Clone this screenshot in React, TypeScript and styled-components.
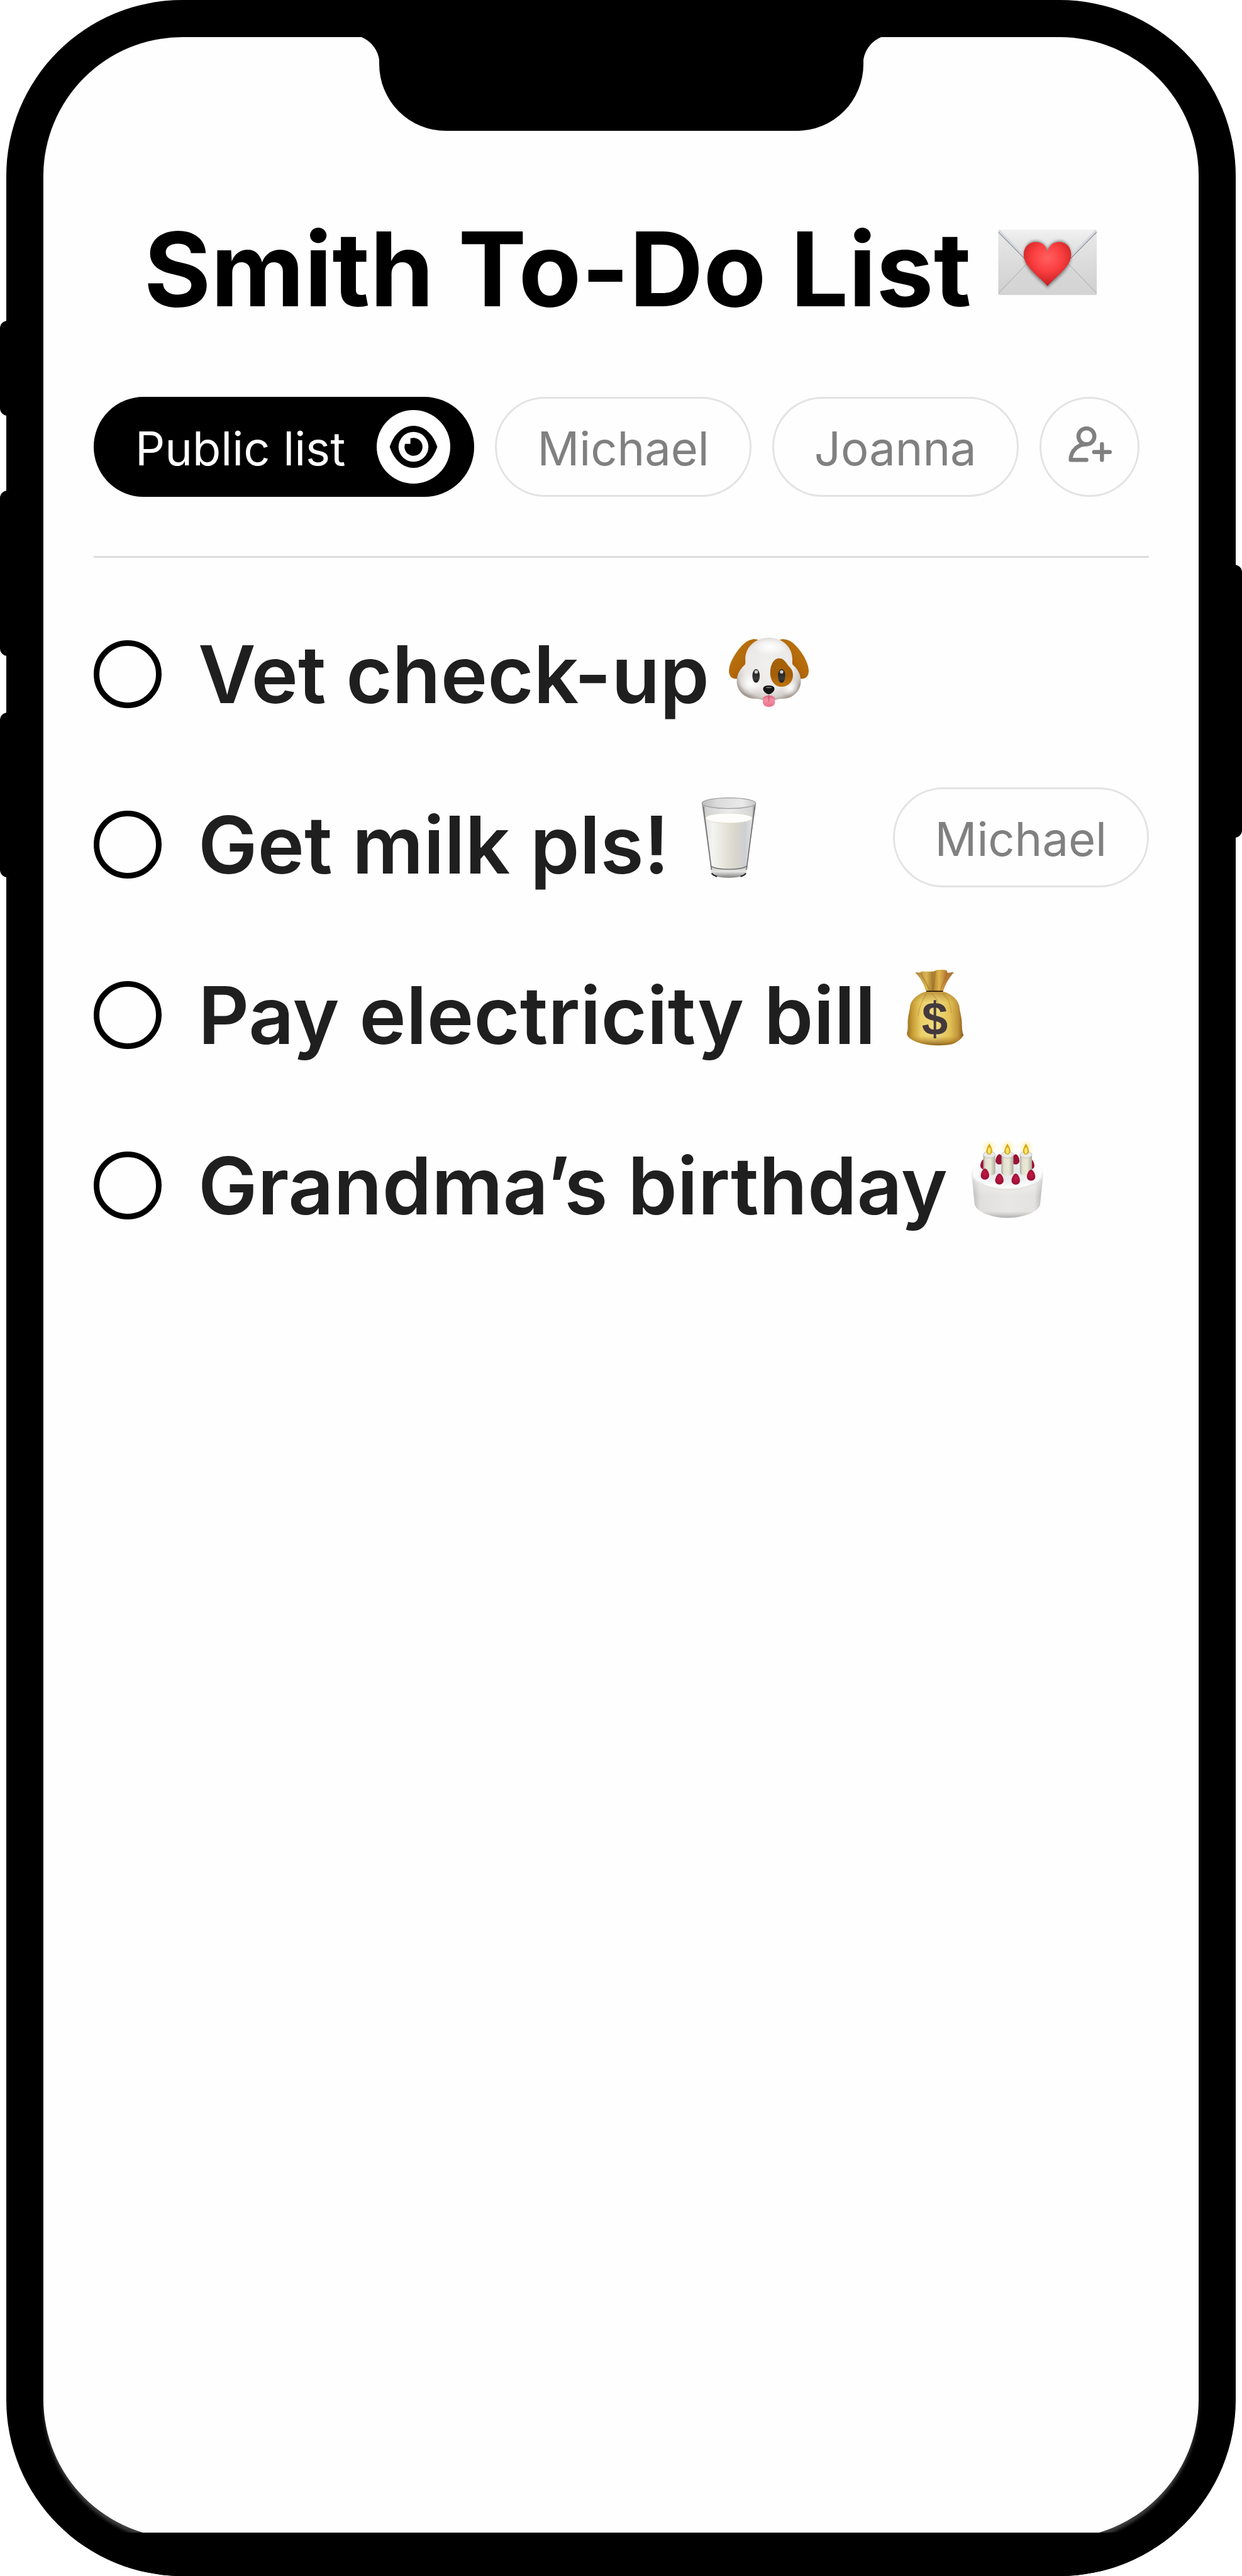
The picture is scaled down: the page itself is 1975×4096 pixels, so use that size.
import React from "react";
import styled, { createGlobalStyle, css } from "styled-components";

const GlobalStyle = createGlobalStyle`
  *, *::before, *::after { box-sizing: border-box; }
  body {
    margin: 0;
    background: #ffffff;
    color: #1f1f20;
    font-family: Inter, "Liberation Sans", sans-serif;
  }
`;

/* ---------- device ---------- */

const Device = styled.div`
  position: relative;
  display: flex;
  min-height: 100vh;
  padding: 0 10px;
`;

const Bezel = styled.div`
  position: relative;
  display: flex;
  flex: 1;
  min-width: 0;
  padding: 59px 59px 60px;
  border-radius: 280px;
  background: #000000;
  overflow: hidden;
`;

const SideKey = styled.span<{ $side: "left" | "right"; $top: number; $length: number }>`
  position: absolute;
  ${(p) => p.$side}: 0;
  top: ${(p) => p.$top}px;
  width: 40px;
  height: ${(p) => p.$length}px;
  border-radius: 12px;
  background: #000000;
`;

const Screen = styled.main`
  flex: 1;
  min-width: 0;
  padding: 274px 79px 160px 80px;
  border-radius: 221px;
  background: #fefefe;
  box-shadow: 0 7px 5px #3c3c3c;
`;

const Chin = styled.div`
  position: absolute;
  right: 0;
  bottom: 0;
  left: 0;
  height: 69px;
  background: #000000;
`;

const ear = css`
  content: "";
  position: absolute;
  top: 0;
  width: 47px;
  height: 43px;
`;

const Notch = styled.div`
  position: absolute;
  top: 59px;
  left: calc(50% - 385px);
  width: 770px;
  height: 149px;
  border-radius: 0 0 106px 106px;
  background: #000000;

  &::before {
    ${ear}
    left: -46px;
    background: radial-gradient(circle at 0 100%, transparent 46px, #000000 47px);
  }

  &::after {
    ${ear}
    right: -46px;
    background: radial-gradient(circle at 100% 100%, transparent 46px, #000000 47px);
  }
`;

/* ---------- header ---------- */

const Header = styled.header`
  display: flex;
  align-items: center;
  justify-content: center;
  gap: 40px;
`;

const Title = styled.h1`
  margin: 0;
  color: #000000;
  font-size: 163px;
  font-weight: 700;
  line-height: 190px;
  white-space: nowrap;
`;

const Emoji = styled.svg<{ $size: number }>`
  flex: none;
  width: ${(p) => p.$size}px;
  height: ${(p) => p.$size}px;
  margin-bottom: 24px;
  overflow: visible;
`;

/* ---------- people filter ---------- */

const pill = css`
  display: flex;
  flex: none;
  align-items: center;
  height: 159px;
  border: 3px solid #e3e3e1;
  border-radius: 80px;
  background: transparent;
  color: #808080;
  font-family: inherit;
  font-size: 74px;
  font-weight: 400;
  line-height: 96px;
  white-space: nowrap;
`;

const Filters = styled.nav`
  display: flex;
  gap: 33px;
  margin-top: 108px;
  padding-bottom: 94px;
  border-bottom: 3px solid #dddddd;
`;

const FilterPill = styled.button<{ $active?: boolean }>`
  ${pill}
  padding: 4px 64px 0;
  cursor: pointer;

  ${(p) =>
    p.$active &&
    css`
      gap: 50px;
      padding: 0 35px 0 63px;
      border-color: #000000;
      background: #000000;
      color: #ffffff;
    `}
`;

const PillText = styled.span`
  padding-top: 4px;
`;

const AddPill = styled.button`
  ${pill}
  justify-content: center;
  width: 159px;
  padding: 0;
  cursor: pointer;
`;

const PillIcon = styled.svg`
  flex: none;
  width: 117px;
  height: 117px;
`;

/* ---------- tasks ---------- */

const TaskList = styled.ul`
  display: flex;
  flex-direction: column;
  gap: 90px;
  margin: 0;
  padding: 94px 0 0;
  list-style: none;
`;

const Task = styled.li`
  display: flex;
  align-items: center;
  min-height: 181px;
`;

const Tick = styled.input`
  flex: none;
  appearance: none;
  width: 108px;
  height: 108px;
  margin: 0;
  border: 9px solid #000000;
  border-radius: 50%;
  cursor: pointer;

  &:checked {
    background: #000000;
  }
`;

const TaskLabel = styled.label`
  display: flex;
  flex: 1;
  align-items: center;
  gap: 30px;
  padding-left: 58px;
  font-size: 126px;
  font-weight: 600;
  line-height: 160px;
  white-space: nowrap;
  cursor: pointer;
`;

const Assignee = styled.span`
  ${pill}
  margin-bottom: 22px;
  padding: 4px 64px 0;
`;

/* ---------- drawings ---------- */

const LoveLetter = () => (
  <Emoji $size={163} viewBox="92 -44 802 802" role="img" aria-label="love letter">
    <defs>
      <linearGradient id="paper" x1="0" y1="0" x2="0" y2="1">
        <stop offset="0" stopColor="#e9e9e9" />
        <stop offset="1" stopColor="#cfcfcf" />
      </linearGradient>
      <linearGradient id="flap" x1="0" y1="0" x2="0" y2="1">
        <stop offset="0" stopColor="#f1f1f1" />
        <stop offset="0.75" stopColor="#d6d6d6" />
        <stop offset="1" stopColor="#b5b5b5" />
      </linearGradient>
      <radialGradient id="heart" cx="0.5" cy="0.36" r="0.68">
        <stop offset="0" stopColor="#ff6060" />
        <stop offset="0.45" stopColor="#fb3f40" />
        <stop offset="0.8" stopColor="#d42628" />
        <stop offset="1" stopColor="#b91c1f" />
      </radialGradient>
      <filter id="heartShade" x="-20%" y="-20%" width="140%" height="150%">
        <feGaussianBlur stdDeviation="11" />
      </filter>
      <clipPath id="letterClip">
        <rect x="108" y="104" width="772" height="512" rx="16" />
      </clipPath>
    </defs>
    <g clipPath="url(#letterClip)">
      <rect x="108" y="104" width="772" height="512" fill="url(#paper)" />
      <path d="M108 616L335 380H653L880 616Z" fill="#d6d6d6" opacity="0.7" />
      <path d="M108 604L330 372M880 604L658 372" stroke="#b9b9b9" strokeWidth="6" />
      <path d="M108 104H880L560 424Q494 480 428 424Z" fill="url(#flap)" />
      <path d="M112 112L400 400M876 112L588 400" stroke="#d6d9e0" strokeWidth="20" />
      <path d="M110 124L400 418M878 124L588 418" stroke="#8b8b8d" strokeWidth="6" />
    </g>
    <path
      d="M494 560C440 500 310 420 310 310C310 150 470 170 494 262C518 170 678 150 678 310C678 420 550 500 494 560Z"
      fill="#4b4b4b"
      opacity="0.6"
      filter="url(#heartShade)"
    />
    <path
      d="M494 545C455 500 400 460 350 400C322 366 308 335 308 298C308 240 350 201 403 201C450 201 483 228 494 276C505 228 538 201 585 201C638 201 679 240 679 298C679 335 665 366 637 400C587 460 533 500 494 545Z"
      fill="url(#heart)"
    />
  </Emoji>
);

const DogFace = () => (
  <Emoji $size={130} viewBox="69 15 640 640" role="img" aria-label="dog">
    <defs>
      <linearGradient id="earL" x1="0" y1="0" x2="1" y2="1">
        <stop offset="0" stopColor="#c07a14" />
        <stop offset="0.5" stopColor="#b3690a" />
        <stop offset="1" stopColor="#8a4a02" />
      </linearGradient>
      <linearGradient id="earR" x1="1" y1="0" x2="0" y2="1">
        <stop offset="0" stopColor="#c07a14" />
        <stop offset="0.5" stopColor="#b3690a" />
        <stop offset="1" stopColor="#8a4a02" />
      </linearGradient>
      <radialGradient id="fur" cx="0.5" cy="0.45" r="0.58">
        <stop offset="0" stopColor="#f1f0ef" />
        <stop offset="0.65" stopColor="#ebe9e8" />
        <stop offset="0.87" stopColor="#d3ceca" />
        <stop offset="1" stopColor="#a2978f" />
      </radialGradient>
      <radialGradient id="brow">
        <stop offset="0" stopColor="#ffffff" />
        <stop offset="1" stopColor="#ffffff" stopOpacity="0" />
      </radialGradient>
      <linearGradient id="patch" x1="0" y1="0" x2="0" y2="1">
        <stop offset="0" stopColor="#a8620a" />
        <stop offset="0.6" stopColor="#a35e08" />
        <stop offset="1" stopColor="#c2750f" />
      </linearGradient>
      <linearGradient id="tongue" x1="0" y1="0" x2="0" y2="1">
        <stop offset="0" stopColor="#d9657a" />
        <stop offset="0.4" stopColor="#f48fa3" />
        <stop offset="1" stopColor="#e5718a" />
      </linearGradient>
      <linearGradient id="eyeball" x1="0" y1="0" x2="0" y2="1">
        <stop offset="0" stopColor="#141414" />
        <stop offset="0.7" stopColor="#3a3a3a" />
        <stop offset="1" stopColor="#161616" />
      </linearGradient>
    </defs>
    <path d="M302 124C255 110 205 135 160 188C110 248 72 320 75 375C78 415 105 432 138 430L215 330L240 190Z" fill="url(#earL)" />
    <path d="M472 124C519 110 569 135 614 188C664 248 702 320 699 375C696 415 669 432 636 430L559 330L534 190Z" fill="url(#earR)" />
    <path
      d="M387 108C290 108 203 175 203 275C203 300 206 312 198 322C165 350 136 395 136 450C136 520 195 586 275 586C310 586 325 592 345 600H430C448 592 464 586 499 586C579 586 638 520 638 450C638 395 609 350 576 322C568 312 571 300 571 275C571 175 484 108 387 108Z"
      fill="url(#fur)"
    />
    <ellipse cx="400" cy="180" rx="140" ry="70" fill="url(#brow)" />
    <ellipse cx="240" cy="470" rx="100" ry="90" fill="url(#brow)" />
    <ellipse cx="555" cy="500" rx="70" ry="70" fill="url(#brow)" />
    <path d="M468 270C505 270 518 300 538 325C556 345 576 360 576 402C576 455 538 493 488 493C435 493 398 445 398 385C398 320 425 270 468 270Z" fill="url(#patch)" />
    <ellipse cx="287" cy="408" rx="29" ry="53" fill="url(#eyeball)" />
    <ellipse cx="487" cy="408" rx="29" ry="53" fill="url(#eyeball)" />
    <ellipse cx="288" cy="376" rx="14" ry="14" fill="#c9c9c9" />
    <ellipse cx="487" cy="376" rx="14" ry="14" fill="#c9c9c9" />
    <path d="M340 578Q387 540 435 578V612C435 636 415 650 387 650C360 650 340 636 340 612Z" fill="url(#tongue)" />
    <path d="M387 560V606" stroke="#c9556f" strokeWidth="6" strokeLinecap="round" />
    <path d="M387 483C415 483 431 492 431 510C431 530 402 552 387 552C372 552 342 530 342 510C342 492 359 483 387 483Z" fill="#151515" />
    <ellipse cx="387" cy="498" rx="24" ry="6" fill="#6d6d6d" />
  </Emoji>
);

const MilkGlass = () => (
  <Emoji $size={130} viewBox="30 84 640 640" role="img" aria-label="glass of milk">
    <defs>
      <linearGradient id="glassWall" x1="0" y1="0" x2="1" y2="0">
        <stop offset="0" stopColor="#9a9a9a" />
        <stop offset="0.08" stopColor="#d2d2d2" />
        <stop offset="0.5" stopColor="#ececec" />
        <stop offset="0.92" stopColor="#d5d5d5" />
        <stop offset="1" stopColor="#858585" />
      </linearGradient>
      <linearGradient id="milkBody" x1="0" y1="0" x2="1" y2="0">
        <stop offset="0" stopColor="#e6e6e6" />
        <stop offset="0.15" stopColor="#f4f4f1" />
        <stop offset="0.4" stopColor="#e7e5dc" />
        <stop offset="0.65" stopColor="#d8d5ca" />
        <stop offset="0.85" stopColor="#cecfd2" />
        <stop offset="1" stopColor="#e2e2e3" />
      </linearGradient>
      <linearGradient id="glassBase" x1="0" y1="0" x2="0" y2="1">
        <stop offset="0" stopColor="#bcbcba" />
        <stop offset="0.45" stopColor="#e6e6e4" />
        <stop offset="1" stopColor="#80807e" />
      </linearGradient>
      <linearGradient id="glassRim" x1="0" y1="0" x2="1" y2="0">
        <stop offset="0" stopColor="#bdbdbd" />
        <stop offset="0.3" stopColor="#dcdcdc" />
        <stop offset="0.75" stopColor="#e9e9e9" />
        <stop offset="1" stopColor="#c8c8c8" />
      </linearGradient>
    </defs>
    <path d="M138 145L215 690C240 735 460 735 484 690L563 145Z" fill="url(#glassWall)" />
    <path d="M168 255L214 632C260 662 440 662 488 630L533 262Z" fill="url(#milkBody)" />
    <ellipse cx="350" cy="256" rx="183" ry="39" fill="#fdfdfb" stroke="#ddd6c8" strokeWidth="4" />
    <ellipse cx="350" cy="139" rx="211" ry="42" fill="url(#glassRim)" stroke="#9b9b9b" strokeWidth="6" />
    <path d="M214 634C255 665 445 665 488 632L484 690C450 733 250 733 215 690Z" fill="url(#glassBase)" />
    <path d="M212 630C255 664 445 664 490 630" fill="none" stroke="#5e5e5e" strokeWidth="6" />
    <path d="M215 688C225 700 240 708 258 713M484 688C474 700 459 708 441 713" fill="none" stroke="#222222" strokeWidth="10" />
    <path d="M150 165L214 660M552 165L488 660" stroke="#6f6f6f" strokeWidth="8" />
  </Emoji>
);

const MoneyBag = () => (
  <Emoji $size={130} viewBox="9 66 640 640" role="img" aria-label="money bag">
    <defs>
      <linearGradient id="sack" x1="0" y1="0" x2="1" y2="0">
        <stop offset="0" stopColor="#9a7024" />
        <stop offset="0.1" stopColor="#c89d36" />
        <stop offset="0.25" stopColor="#ecd067" />
        <stop offset="0.5" stopColor="#f0db80" />
        <stop offset="0.75" stopColor="#e3c356" />
        <stop offset="0.9" stopColor="#c1953a" />
        <stop offset="1" stopColor="#855a1a" />
      </linearGradient>
      <linearGradient id="sackShade" x1="0" y1="0" x2="0" y2="1">
        <stop offset="0" stopColor="#a97a26" stopOpacity="0.7" />
        <stop offset="0.2" stopColor="#a97a26" stopOpacity="0" />
        <stop offset="0.82" stopColor="#b07a20" stopOpacity="0" />
        <stop offset="1" stopColor="#80500f" stopOpacity="0.85" />
      </linearGradient>
      <linearGradient id="ruff" x1="0" y1="0" x2="1" y2="0">
        <stop offset="0" stopColor="#b0813f" />
        <stop offset="0.3" stopColor="#d9b550" />
        <stop offset="0.45" stopColor="#a67a30" />
        <stop offset="0.62" stopColor="#e0b64c" />
        <stop offset="0.8" stopColor="#b87a34" />
        <stop offset="1" stopColor="#a3753a" />
      </linearGradient>
    </defs>
    <path
      d="M260 262C200 275 145 320 134 370C132 400 122 430 117 470C112 510 120 545 110 580C104 600 115 615 135 630C190 668 270 682 345 682C400 682 450 678 480 665C510 650 535 630 552 602C540 580 540 545 538 500C536 450 522 420 518 372C500 310 440 272 390 262Z"
      fill="url(#sack)"
    />
    <path
      d="M260 262C200 275 145 320 134 370C132 400 122 430 117 470C112 510 120 545 110 580C104 600 115 615 135 630C190 668 270 682 345 682C400 682 450 678 480 665C510 650 535 630 552 602C540 580 540 545 538 500C536 450 522 420 518 372C500 310 440 272 390 262Z"
      fill="url(#sackShade)"
    />
    <path d="M262 275C225 330 205 380 195 450M300 272C330 300 345 330 352 350M388 275C430 310 450 350 455 430" fill="none" stroke="#a87824" strokeWidth="9" opacity="0.35" />
    <path d="M258 258C240 200 215 150 172 114C190 108 205 114 216 110C220 98 240 104 262 104C290 104 315 108 328 98C350 88 400 90 418 96C426 102 420 112 428 114C446 116 462 108 476 112C440 150 405 210 392 258Z" fill="url(#ruff)" />
    <path d="M216 112C235 160 265 200 285 250M328 100C330 150 318 200 312 250M422 112C410 160 385 200 372 250" fill="none" stroke="#8f5f20" strokeWidth="8" opacity="0.45" />
    <path d="M260 259H391" stroke="#2a1508" strokeWidth="8" />
    <text x="326" y="597" textAnchor="middle" fontFamily="Liberation Sans, Arial, sans-serif" fontSize="367" fontWeight="700" fill="#443a3d">
      $
    </text>
  </Emoji>
);

const flames = [235, 377, 522];
const frontBerries = [
  [201, 338],
  [314, 377],
  [442, 378],
  [562, 347],
];
const backBerries = [
  [195, 262],
  [314, 224],
  [441, 224],
  [558, 262],
];

const BirthdayCake = () => (
  <Emoji $size={130} viewBox="57 48 640 640" role="img" aria-label="birthday cake">
    <defs>
      <linearGradient id="side" x1="0" y1="0" x2="1" y2="0">
        <stop offset="0" stopColor="#b9b7b4" />
        <stop offset="0.12" stopColor="#e0dfdd" />
        <stop offset="0.5" stopColor="#e9e7e5" />
        <stop offset="0.88" stopColor="#e3e2e0" />
        <stop offset="1" stopColor="#b5b3b0" />
      </linearGradient>
      <linearGradient id="sideShade" x1="0" y1="0" x2="0" y2="1">
        <stop offset="0" stopColor="#ffffff" stopOpacity="0.6" />
        <stop offset="0.5" stopColor="#ffffff" stopOpacity="0" />
        <stop offset="0.85" stopColor="#b5b3b0" stopOpacity="0" />
        <stop offset="1" stopColor="#a19f9c" stopOpacity="0.8" />
      </linearGradient>
      <radialGradient id="icing" cx="0.5" cy="0.45" r="0.52">
        <stop offset="0" stopColor="#e0e5e8" />
        <stop offset="0.6" stopColor="#edf0f1" />
        <stop offset="0.9" stopColor="#fdfdfd" />
        <stop offset="1" stopColor="#e4e4e3" />
      </radialGradient>
      <linearGradient id="wax" x1="0" y1="0" x2="1" y2="0">
        <stop offset="0" stopColor="#a9a797" />
        <stop offset="0.2" stopColor="#e2e1d0" />
        <stop offset="0.6" stopColor="#ebead9" />
        <stop offset="1" stopColor="#adab9b" />
      </linearGradient>
      <radialGradient id="glow">
        <stop offset="0.2" stopColor="#ffef9a" stopOpacity="0.75" />
        <stop offset="1" stopColor="#fff6c8" stopOpacity="0" />
      </radialGradient>
      <radialGradient id="berry" cx="0.5" cy="0.45" r="0.6">
        <stop offset="0" stopColor="#c51a45" />
        <stop offset="1" stopColor="#930f31" />
      </radialGradient>
    </defs>
    <path d="M97 335L120 575C135 635 250 680 377 680C504 680 620 635 633 575L657 335Z" fill="url(#side)" />
    <path d="M97 335L120 575C135 635 250 680 377 680C504 680 620 635 633 575L657 335Z" fill="url(#sideShade)" />
    <ellipse cx="377" cy="336" rx="280" ry="130" fill="url(#icing)" />
    {backBerries.map(([x, y]) => (
      <path key={x} d={`M${x} ${y - 42}C${x + 18} ${y - 40} ${x + 30} ${y - 8} ${x + 30} ${y + 10}C${x + 30} ${y + 48} ${x - 30} ${y + 48} ${x - 30} ${y + 10}C${x - 30} ${y - 8} ${x - 18} ${y - 40} ${x} ${y - 42}Z`} fill="#9c1236" />
    ))}
    {flames.map((x) => (
      <g key={x}>
        <circle cx={x} cy="130" r="66" fill="url(#glow)" />
        <path d={`M${x - 47} 190V325C${x - 47} 358 ${x + 47} 358 ${x + 47} 325V190Z`} fill="url(#wax)" />
        <ellipse cx={x} cy="186" rx="47" ry="26" fill="#e9e9e6" stroke="#b9b8af" strokeWidth="4" />
        <path d={`M${x} 97C${x + 10} 120 ${x + 23} 135 ${x + 23} 158C${x + 23} 194 ${x - 23} 194 ${x - 23} 158C${x - 23} 135 ${x - 10} 120 ${x} 97Z`} fill="#d6a313" />
        <ellipse cx={x} cy="154" rx="13" ry="26" fill="#f4e46c" />
      </g>
    ))}
    {frontBerries.map(([x, y]) => (
      <path key={x} d={`M${x} ${y - 44}C${x + 18} ${y - 42} ${x + 33} ${y - 8} ${x + 33} ${y + 10}C${x + 33} ${y + 54} ${x - 33} ${y + 54} ${x - 33} ${y + 10}C${x - 33} ${y - 8} ${x - 18} ${y - 42} ${x} ${y - 44}Z`} fill="url(#berry)" />
    ))}
  </Emoji>
);

const tasks = [
  { id: "task-vet", text: "Vet check-up", Icon: DogFace },
  { id: "task-milk", text: "Get milk pls!", Icon: MilkGlass, assignee: "Michael" },
  { id: "task-bill", text: "Pay electricity bill", Icon: MoneyBag },
  { id: "task-birthday", text: "Grandma’s birthday", Icon: BirthdayCake },
];

export default function App() {
  return (
    <>
      <GlobalStyle />
      <Device>
        <SideKey $side="left" $top={510} $length={151} />
        <SideKey $side="left" $top={780} $length={263} />
        <SideKey $side="left" $top={1133} $length={262} />
        <SideKey $side="right" $top={898} $length={434} />
        <Bezel>
          <Screen>
            <Header>
              <Title>Smith To-Do List</Title>
              <LoveLetter />
            </Header>
            <Filters aria-label="Lists">
              <FilterPill type="button" $active aria-pressed="true">
                <PillText>Public list</PillText>
                <PillIcon viewBox="-96 -96 192 192" aria-hidden="true">
                  <circle r="96" fill="#ffffff" />
                  <path d="M-62 0C-52 -32 -28 -55 0 -55S52 -32 62 0C52 32 28 55 0 55S-52 32 -62 0Z" fill="#000000" />
                  <circle r="39" fill="#ffffff" />
                  <path d="M-8 -22A23.5 23.5 0 1 1 -22 -8H-8Z" fill="#000000" />
                </PillIcon>
              </FilterPill>
              <FilterPill type="button">Michael</FilterPill>
              <FilterPill type="button">Joanna</FilterPill>
              <AddPill type="button" aria-label="Add person">
                <PillIcon viewBox="-96 -96 192 192" fill="none" stroke="#808080" strokeWidth="10.5" strokeLinecap="round" strokeLinejoin="round" aria-hidden="true">
                  <circle cx="-8" cy="-27.5" r="20.75" />
                  <path d="M-8 34H-49A41 41 0 0 1 -8 -7" />
                  <path d="M12 13.5H53M32.5 -7V34" />
                </PillIcon>
              </AddPill>
            </Filters>
            <TaskList>
              {tasks.map(({ id, text, Icon, assignee }) => (
                <Task key={id}>
                  <Tick type="checkbox" id={id} />
                  <TaskLabel htmlFor={id}>
                    {text}
                    <Icon />
                  </TaskLabel>
                  {assignee && <Assignee>{assignee}</Assignee>}
                </Task>
              ))}
            </TaskList>
          </Screen>
          <Chin />
        </Bezel>
        <Notch />
      </Device>
    </>
  );
}
